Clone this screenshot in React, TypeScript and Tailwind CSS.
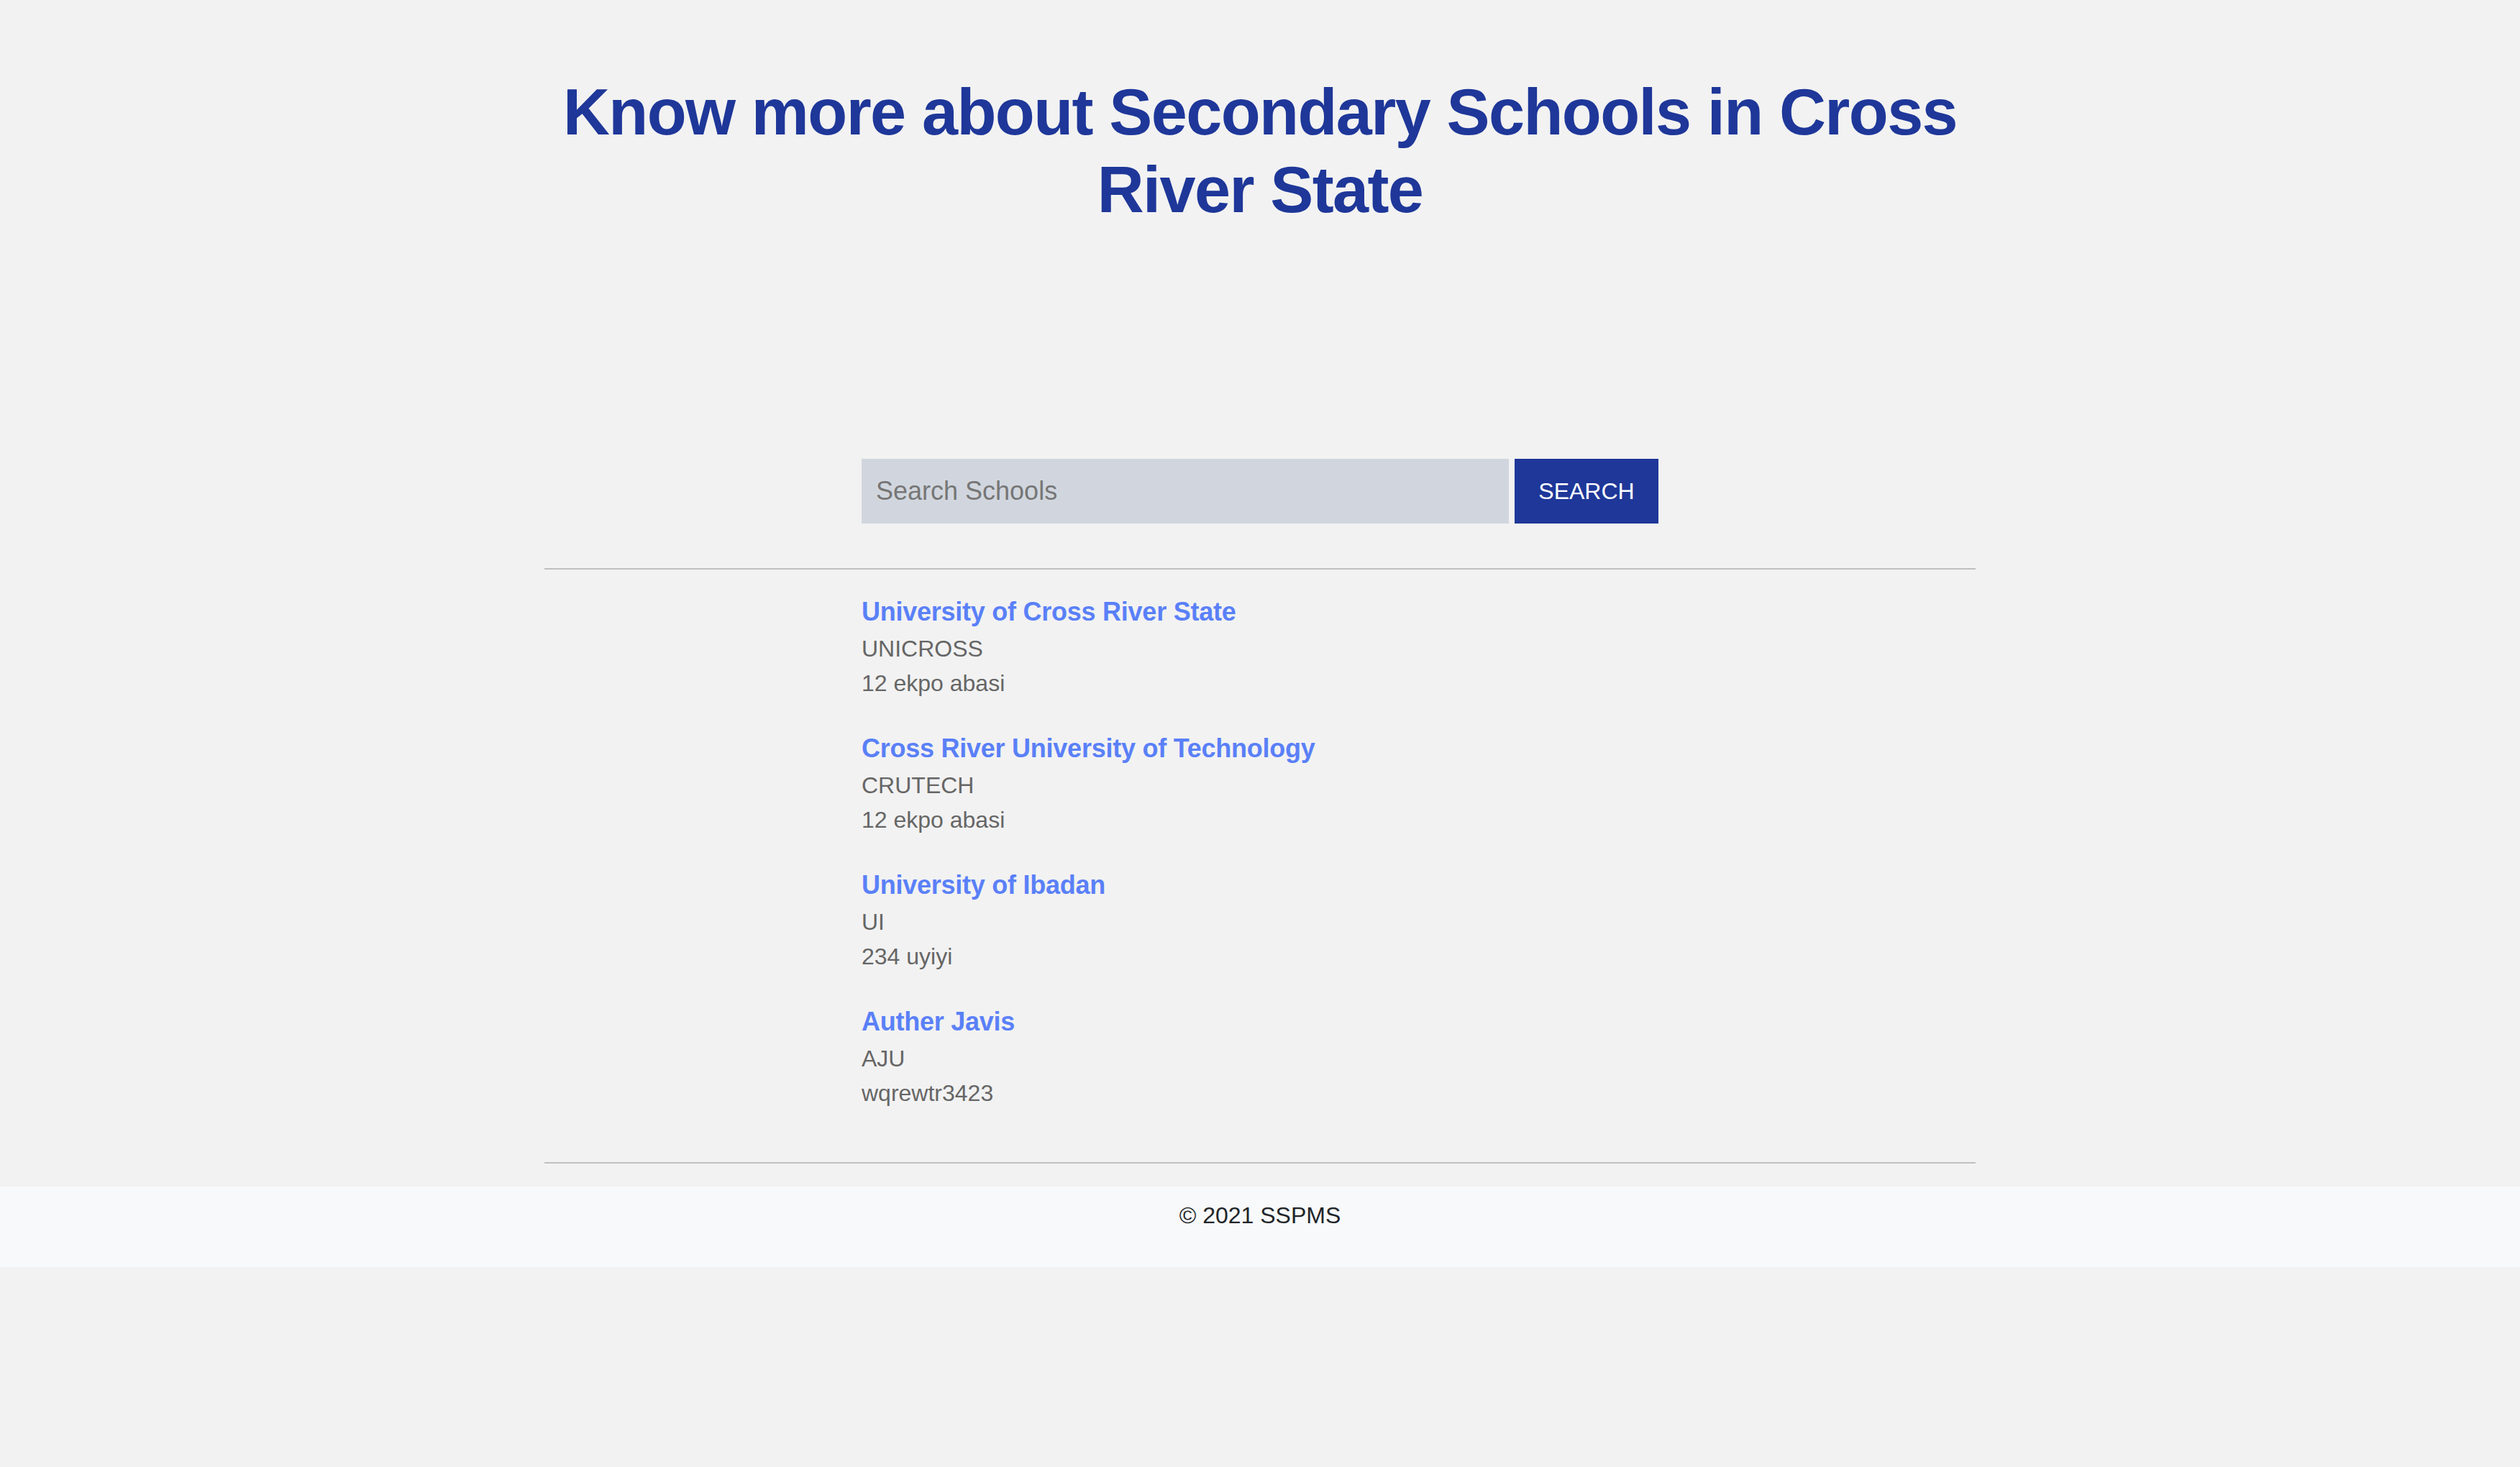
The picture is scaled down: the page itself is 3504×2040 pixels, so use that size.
import React from "react";

type School = {
  name: string;
  short: string;
  address: string;
};

const schools: School[] = [
  { name: "University of Cross River State", short: "UNICROSS", address: "12 ekpo abasi" },
  { name: "Cross River University of Technology", short: "CRUTECH", address: "12 ekpo abasi" },
  { name: "University of Ibadan", short: "UI", address: "234 uyiyi" },
  { name: "Auther Javis", short: "AJU", address: "wqrewtr3423" },
];

export default function App() {
  return (
    <div
      className="min-h-screen bg-[#f2f2f2] text-[32px] leading-[48px]"
      style={{ fontFamily: '"Liberation Sans", Arial, sans-serif' }}
    >
      <div className="mx-auto w-[1990px]">
        {/* Header */}
        <h1 className="pt-[102px] text-center text-[90px] leading-[108px] font-bold tracking-[-1.6px] text-[#1e3799]">
          Know more about Secondary Schools in Cross River State
        </h1>

        {/* Search */}
        <div className="mx-auto mt-[320px] w-[1108px]">
          <form className="flex gap-2" onSubmit={(e) => e.preventDefault()}>
            <input
              type="text"
              placeholder="Search Schools"
              className="h-[90px] w-[900px] bg-[#d1d6de] px-5 text-[36px] text-[#333] placeholder:text-[#767676] outline-none"
            />
            <button
              type="submit"
              className="h-[90px] w-[200px] bg-[#1e3799] text-[32px] text-white"
            >
              SEARCH
            </button>
          </form>
        </div>

        <hr className="mt-[62px] border-t-2 border-[#c0c0c0]" />

        {/* Results */}
        <div className="mx-auto w-[1108px] py-8">
          {schools.map((school, index) => (
            <div key={index} className="mb-10">
              <a
                href="#"
                className="block text-[36px] leading-[54px] font-bold tracking-[-0.25px] text-[#5a80f8]"
              >
                {school.name}
              </a>
              <p className="text-[#666]">{school.short}</p>
              <p className="text-[#666]">{school.address}</p>
            </div>
          ))}
        </div>

        <hr className="border-t-2 border-[#c0c0c0]" />
      </div>

      {/* Footer */}
      <footer className="mt-8 bg-[#f8f9fa] pt-4 pb-12 text-center text-[#212529]">
        © 2021 SSPMS
      </footer>
    </div>
  );
}
